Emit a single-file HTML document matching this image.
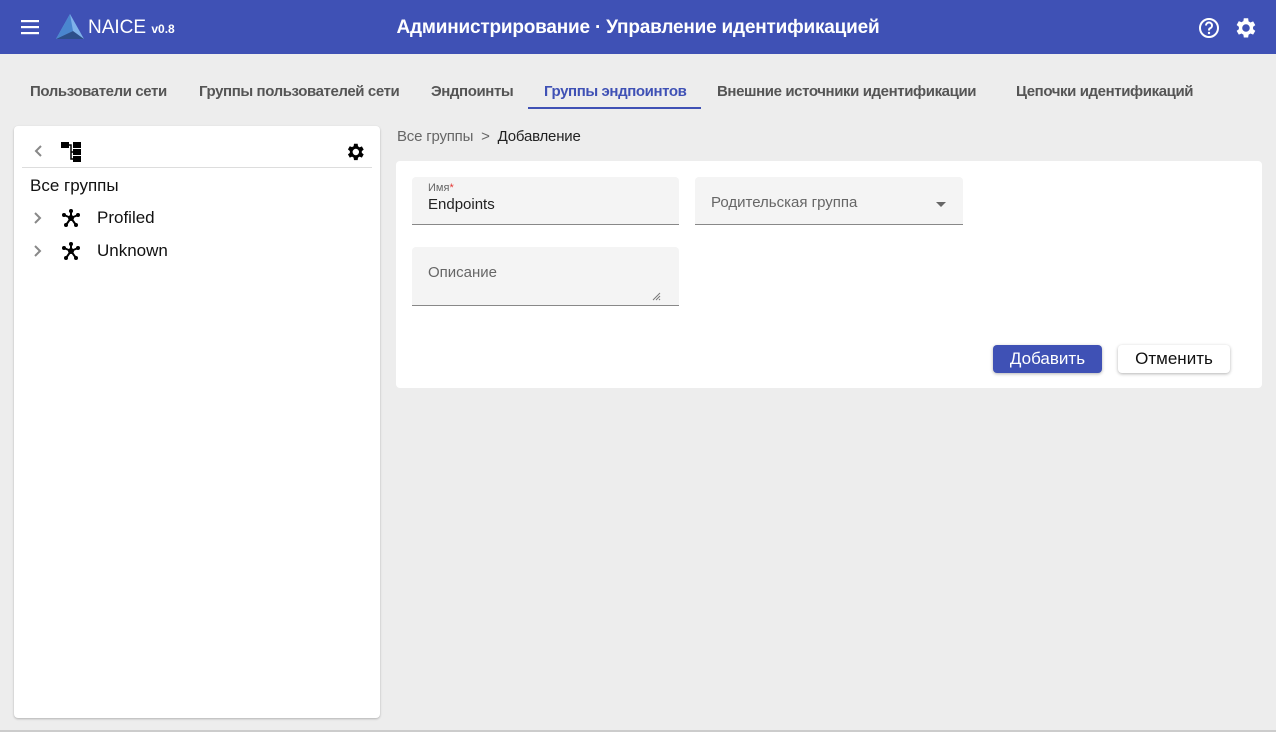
<!DOCTYPE html>
<html><head><meta charset="utf-8"><style>
*{box-sizing:border-box;margin:0;padding:0}
body{width:1276px;height:732px;background:#ededed;font-family:"Liberation Sans","Noto Sans CJK SC",sans-serif;position:relative;overflow:hidden;color:#222}
.top{position:absolute;left:0;top:0;width:1276px;height:54px;background:#3f51b5;color:#fff}
.title{position:absolute;left:0;right:0;top:17px;text-align:center;font-size:19px;font-weight:bold;letter-spacing:-0.2px}
.tabs{position:absolute;top:83px;left:14px;font-size:15px;font-weight:bold;color:#555;letter-spacing:-0.4px}
.tab{position:absolute;top:0;white-space:nowrap}
.side{position:absolute;left:14px;top:126px;width:366px;height:592px;background:#fff;border-radius:4px;box-shadow:0 1px 2px rgba(0,0,0,.25)}
.card{position:absolute;left:396px;top:161px;width:866px;height:227px;background:#fff;border-radius:4px}
.field{position:absolute;background:#f4f4f4;border-bottom:1px solid #888;border-radius:4px 4px 0 0}
.btn{position:absolute;height:28px;border-radius:4px;font-size:17px;text-align:center;line-height:28px;box-shadow:0 1px 3px rgba(0,0,0,.3)}
</style></head><body>
<div class="top">
<svg style="position:absolute;left:21px;top:19px" width="20" height="16"><rect y="1" width="18" height="2.2" fill="#fff"/><rect y="7" width="18" height="2.2" fill="#fff"/><rect y="13" width="18" height="2.2" fill="#fff"/></svg>
<svg style="position:absolute;left:55px;top:13px" width="30" height="27" viewBox="0 0 30 27"><polygon points="15,1 29,26 1,26" fill="#7fb2ea"/><polygon points="15,1 18,18 1,26" fill="#4a86cf"/><polygon points="1,26 18,18 29,26" fill="#2d4f8a"/></svg>
<div style="position:absolute;left:88px;top:17px;font-size:19px;">NAICE <span style="font-size:12px;font-weight:bold">v0.8</span></div>
<div class="title">Администрирование · Управление идентификацией</div>
<svg style="position:absolute;left:1198px;top:17px" width="22" height="22" viewBox="0 0 22 22"><circle cx="11" cy="11" r="9" fill="none" stroke="#fff" stroke-width="2"/><path d="M8 8.5a3 3 0 1 1 4 2.8c-1 .5-1 1-1 2.2" fill="none" stroke="#fff" stroke-width="2"/><circle cx="11" cy="16" r="1.2" fill="#fff"/></svg>
<svg style="position:absolute;left:1232px;top:15px" width="26" height="26" viewBox="0 0 24 24"><path fill="#fff" d="M19.4 13a7.5 7.5 0 0 0 0-2l2.1-1.6-2-3.5-2.5 1a7.3 7.3 0 0 0-1.7-1L14.9 3h-4l-.4 2.7a7.3 7.3 0 0 0-1.7 1l-2.5-1-2 3.5L6.4 11a7.5 7.5 0 0 0 0 2l-2.1 1.6 2 3.5 2.5-1a7.3 7.3 0 0 0 1.7 1l.4 2.7h4l.4-2.7a7.3 7.3 0 0 0 1.7-1l2.5 1 2-3.5zM12.9 15.5a3.5 3.5 0 1 1 0-7 3.5 3.5 0 0 1 0 7z"/></svg>
</div>
<div class="tabs">
<div class="tab" style="left:16px">Пользователи сети</div>
<div class="tab" style="left:185px">Группы пользователей сети</div>
<div class="tab" style="left:417px">Эндпоинты</div>
<div class="tab" style="left:530px;color:#3f51b5">Группы эндпоинтов</div>
<div class="tab" style="left:703px">Внешние источники идентификации</div>
<div class="tab" style="left:1002px">Цепочки идентификаций</div>
</div>
<div style="position:absolute;left:528px;top:107px;width:173px;height:2px;background:#3f51b5"></div>
<div class="side">
<svg style="position:absolute;left:19px;top:18px" width="10" height="14"><path d="M8 2L3 7l5 5" fill="none" stroke="#888" stroke-width="2"/></svg>
<svg style="position:absolute;left:47px;top:16px" width="22" height="20"><rect x="0" y="0" width="8" height="6" fill="#000"/><rect x="12" y="0" width="8" height="6" fill="#000"/><rect x="12" y="7" width="8" height="6" fill="#000"/><rect x="12" y="14" width="8" height="6" fill="#000"/><path d="M8 3h2v14h2M10 10h2" stroke="#000" stroke-width="1.5" fill="none"/></svg>
<svg style="position:absolute;left:330px;top:15px" width="22" height="22" viewBox="0 0 24 24"><path fill="#000" d="M19.4 13a7.5 7.5 0 0 0 0-2l2.1-1.6-2-3.5-2.5 1a7.3 7.3 0 0 0-1.7-1L14.9 3h-4l-.4 2.7a7.3 7.3 0 0 0-1.7 1l-2.5-1-2 3.5L6.4 11a7.5 7.5 0 0 0 0 2l-2.1 1.6 2 3.5 2.5-1a7.3 7.3 0 0 0 1.7 1l.4 2.7h4l.4-2.7a7.3 7.3 0 0 0 1.7-1l2.5 1 2-3.5zM12.9 15.5a3.5 3.5 0 1 1 0-7 3.5 3.5 0 0 1 0 7z"/></svg>
<div style="position:absolute;left:8px;top:41px;width:350px;height:1px;background:#ddd"></div>
<div style="position:absolute;left:16px;top:50px;font-size:17px;color:#111">Все группы</div>
<svg style="position:absolute;left:19px;top:85px" width="10" height="14"><path d="M2 2l5 5-5 5" fill="none" stroke="#888" stroke-width="2"/></svg>
<svg style="position:absolute;left:48px;top:83px" width="18" height="18" viewBox="0 0 18 18"><path d="M9 9L9 2M9 9L2 6M9 9L16 6M9 9L4 16M9 9L14 16" stroke="#000" stroke-width="2"/><circle cx="9" cy="9" r="3" fill="#000"/><circle cx="9" cy="2" r="2" fill="#000"/><circle cx="2" cy="6" r="2" fill="#000"/><circle cx="16" cy="6" r="2" fill="#000"/><circle cx="4" cy="16" r="2" fill="#000"/><circle cx="14" cy="16" r="2" fill="#000"/></svg>
<div style="position:absolute;left:83px;top:82px;font-size:17px;color:#111">Profiled</div>
<svg style="position:absolute;left:19px;top:118px" width="10" height="14"><path d="M2 2l5 5-5 5" fill="none" stroke="#888" stroke-width="2"/></svg>
<svg style="position:absolute;left:48px;top:116px" width="18" height="18" viewBox="0 0 18 18"><path d="M9 9L9 2M9 9L2 6M9 9L16 6M9 9L4 16M9 9L14 16" stroke="#000" stroke-width="2"/><circle cx="9" cy="9" r="3" fill="#000"/><circle cx="9" cy="2" r="2" fill="#000"/><circle cx="2" cy="6" r="2" fill="#000"/><circle cx="16" cy="6" r="2" fill="#000"/><circle cx="4" cy="16" r="2" fill="#000"/><circle cx="14" cy="16" r="2" fill="#000"/></svg>
<div style="position:absolute;left:83px;top:115px;font-size:17px;color:#111">Unknown</div>
</div>
<div style="position:absolute;left:397px;top:128px;font-size:15px;color:#666;letter-spacing:-0.2px">Все группы &nbsp;&gt;&nbsp; <span style="color:#222">Добавление</span></div>
<div class="card">
<div class="field" style="left:16px;top:16px;width:267px;height:48px">
<div style="position:absolute;left:16px;top:5px;font-size:11px;color:#666">Имя<span style="color:#e53935">*</span></div>
<div style="position:absolute;left:16px;top:19px;font-size:15px;color:#222">Endpoints</div></div>
<div class="field" style="left:299px;top:16px;width:268px;height:48px">
<div style="position:absolute;left:16px;top:17px;font-size:15px;color:#666">Родительская группа</div>
<div style="position:absolute;left:241px;top:25px;width:0;height:0;border-left:5px solid transparent;border-right:5px solid transparent;border-top:5px solid #666"></div></div>
<div class="field" style="left:16px;top:86px;width:267px;height:59px">
<div style="position:absolute;left:16px;top:17px;font-size:15px;color:#666">Описание</div>
<svg style="position:absolute;left:239px;top:44px" width="10" height="10"><path d="M9 2L2 9M9 5L5 9M9 8L8 9" stroke="#777"/></svg></div>
<div class="btn" style="left:597px;top:184px;width:109px;background:#3f51b5;color:#fff">Добавить</div>
<div class="btn" style="left:722px;top:184px;width:112px;background:#fff;color:#111">Отменить</div>
</div>
<div style="position:absolute;left:0;top:730px;width:1276px;height:2px;background:#ccc"></div>
</body></html>
